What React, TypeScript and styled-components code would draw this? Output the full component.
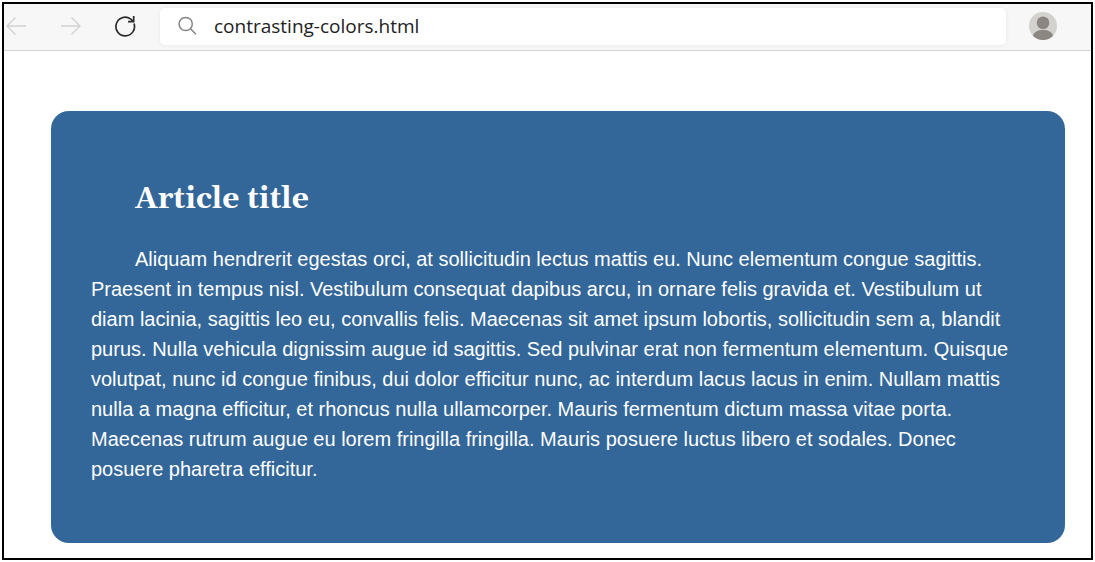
import React from "react";
import styled, { createGlobalStyle } from "styled-components";

const GlobalStyle = createGlobalStyle`
  *, *::before, *::after { box-sizing: border-box; }
  html, body, #root { height: 100%; }
  body { margin: 0; background: #fff; }
`;

const Page = styled.div`
  min-height: 100%;
  padding: 2px;
  display: flex;
`;

const BrowserWindow = styled.div`
  flex: 1;
  min-width: 0;
  display: flex;
  flex-direction: column;
  border: 2px solid #000;
  background: #fff;
`;

const Toolbar = styled.header`
  display: flex;
  align-items: center;
  height: 47px;
  padding: 0 34px 2px 0;
  background: #f7f7f7;
  border-bottom: 1px solid #d3d3d3;
`;

const NavButtons = styled.nav`
  display: flex;
  gap: 30px;
  margin-right: 24px;
`;

const IconButton = styled.button<{ $color: string }>`
  display: flex;
  padding: 0;
  border: 0;
  background: none;
  color: ${(p) => p.$color};
`;

const AddressBar = styled.label`
  flex: 1;
  min-width: 0;
  display: flex;
  align-items: center;
  gap: 16px;
  height: 37px;
  padding: 0 18px;
  border-radius: 5px;
  background: #fff;
  box-shadow: 0 0 4px rgba(0, 0, 0, 0.07);
  color: #858585;
`;

const AddressInput = styled.input`
  flex: 1;
  min-width: 0;
  height: 28px;
  padding: 0;
  border: 0;
  outline: 0;
  background: none;
  color: #222;
  font: 19px "Open Sans", "Noto Sans", sans-serif;
`;

const Profile = styled(IconButton)`
  margin-left: 23px;
`;

const Content = styled.main`
  padding: 60px 26px 15px 47px;
`;

const Card = styled.article`
  padding: 68px 40px 59px;
  border-radius: 18px;
  background: #336699;
  color: #fff;
`;

const Title = styled.h1`
  margin: 0 0 25px;
  padding-left: 44px;
  font: bold 30px/40px Gelasio, Georgia, "Liberation Serif", serif;
`;

const Paragraph = styled.p`
  margin: 0;
  text-indent: 44px;
  font: 20px/30px "Liberation Sans", Arial, sans-serif;
`;

const stroke = { fill: "none", stroke: "currentColor", strokeWidth: 1.4 };

export default function App() {
  return (
    <>
      <GlobalStyle />
      <Page>
        <BrowserWindow>
          <Toolbar>
            <NavButtons>
              <IconButton type="button" aria-label="Back" $color="#d2d2d2">
                <svg width="24" height="24" viewBox="0 0 24 24" {...stroke}>
                  <path d="M22 12H3M11.5 3.5 3 12l8.500 8.500" />
                </svg>
              </IconButton>
              <IconButton type="button" aria-label="Forward" $color="#d2d2d2">
                <svg width="24" height="24" viewBox="0 0 24 24" {...stroke}>
                  <path d="M3 12h19M13.500 3.500l8.500 8.500-8.500 8.500" />
                </svg>
              </IconButton>
              <IconButton type="button" aria-label="Refresh" $color="#2b2b2b">
                <svg width="24" height="24" viewBox="0 0 24 24" {...stroke} strokeWidth={1.7}>
                  <path d="M22 9.500a9.300 9.300 0 1 1-3.500-4.600l2.700 2.400" />
                  <path d="M21.700 2v5.700h-5.700" />
                </svg>
              </IconButton>
            </NavButtons>
            <AddressBar>
              <svg width="20" height="20" viewBox="0 0 20 20" {...stroke} strokeWidth={1.5}>
                <circle cx="7.700" cy="8" r="6.600" />
                <path d="M12.500 12.800 18 18.300" />
              </svg>
              <AddressInput aria-label="Address" type="text" defaultValue="contrasting-colors.html" spellCheck={false} />
            </AddressBar>
            <Profile type="button" aria-label="Profile" $color="#8b8682">
              <svg width="28" height="28" viewBox="0 0 28 28">
                <defs>
                  <clipPath id="avatar">
                    <circle cx="14" cy="14" r="14" />
                  </clipPath>
                </defs>
                <circle cx="14" cy="14" r="14" fill="#d4d2cf" />
                <circle cx="14" cy="10.700" r="6.300" fill="currentColor" />
                <ellipse cx="14" cy="25" rx="10.500" ry="7.200" fill="currentColor" clipPath="url(#avatar)" />
              </svg>
            </Profile>
          </Toolbar>
          <Content>
            <Card>
              <Title>Article title</Title>
              <Paragraph>
                Aliquam hendrerit egestas orci, at sollicitudin lectus mattis eu. Nunc elementum congue sagittis.
                Praesent in tempus nisl. Vestibulum consequat dapibus arcu, in ornare felis gravida et. Vestibulum ut
                diam lacinia, sagittis leo eu, convallis felis. Maecenas sit amet ipsum lobortis, sollicitudin sem a,
                blandit purus. Nulla vehicula dignissim augue id sagittis. Sed pulvinar erat non fermentum elementum.
                Quisque volutpat, nunc id congue finibus, dui dolor efficitur nunc, ac interdum lacus lacus in enim.
                Nullam mattis nulla a magna efficitur, et rhoncus nulla ullamcorper. Mauris fermentum dictum massa
                vitae porta. Maecenas rutrum augue eu lorem fringilla fringilla. Mauris posuere luctus libero et
                sodales. Donec posuere pharetra efficitur.
              </Paragraph>
            </Card>
          </Content>
        </BrowserWindow>
      </Page>
    </>
  );
}
